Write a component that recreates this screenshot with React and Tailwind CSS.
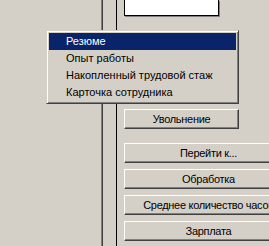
import React from "react";

const menuItems = ["Резюме", "Опыт работы", "Накопленный трудовой стаж", "Карточка сотрудника"];
const buttons = ["Перейти к...", "Обработка", "Среднее количество часов", "Зарплата"];

function WinButton({ label, className }) {
  return (
    <div
      className={
        "h-[20px] flex items-center justify-center border-t border-l border-t-white border-l-white border-r border-b border-r-[#404040] border-b-[#404040] shadow-[inset_-1px_-1px_#808080] text-[11px] tracking-[-0.3px] text-black whitespace-nowrap overflow-hidden " +
        className
      }
    >
      {label}
    </div>
  );
}

export default function App() {
  return (
    <div
      className="relative w-[269px] h-[246px] overflow-hidden bg-[#d4d0c8] flex flex-row"
      style={{ fontFamily: '"Liberation Sans", Arial, sans-serif' }}
    >
      <div className="w-[101px] shrink-0" />
      <div className="w-px shrink-0 bg-[#808080]" />
      <div className="w-px shrink-0 bg-[#404040]" />
      <div className="w-px shrink-0 bg-[#d4d0c8]" />
      <div className="w-[12px] shrink-0" />
      <div className="w-px shrink-0 bg-black" />
      <div className="w-[7px] shrink-0" />

      <div className="flex flex-col shrink-0">
        <div className="w-[95px] h-[16px] bg-white border-l border-r border-b border-black shadow-[1px_1px_#808080]" />
        <WinButton label="Увольнение" className="w-[115px] mt-[93px]" />
        <div className="flex flex-col gap-[6px] mt-[14px]">
          {buttons.map((b) => (
            <WinButton key={b} label={b} className="w-[169px]" />
          ))}
        </div>
      </div>

      <div className="absolute left-[46px] top-[30px] w-[193px] border border-t-[#d4d0c8] border-l-[#d4d0c8] border-r-[#404040] border-b-[#404040] shadow-[inset_1px_1px_white,inset_-1px_-1px_#808080] bg-[#d4d0c8] p-[2px]">
        {menuItems.map((item, i) => (
          <div
            key={item}
            className={
              "h-[17px] flex items-center pl-[17px] text-[11px] " +
              (i === 0 ? "bg-[#0a246a] text-white" : "text-black")
            }
          >
            {item}
          </div>
        ))}
      </div>
    </div>
  );
}
